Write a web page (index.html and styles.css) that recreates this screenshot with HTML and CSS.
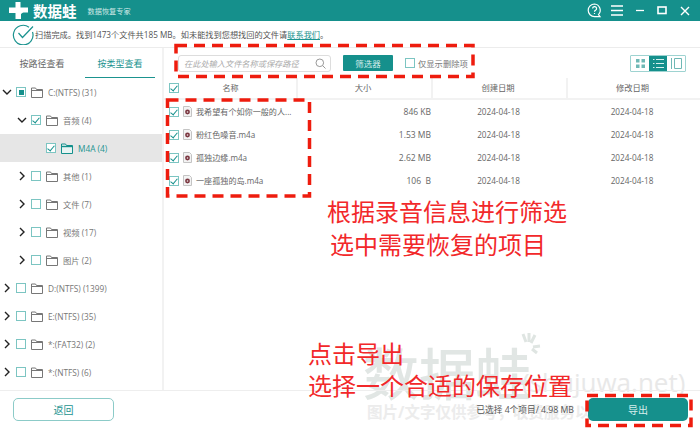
FILE: index.html
```html
<!DOCTYPE html>
<html lang="zh-CN">
<head>
  <meta charset="UTF-8" />
  <title>数据蛙数据恢复专家</title>
  <link rel="stylesheet" href="styles.css">
</head>
<body>

  <svg class="defs" width="0" height="0">
    <symbol id="folder" viewBox="0 0 12 11">
      <path d="M.5 10.5V1h4l1 1.5h6v8z" fill="#fff" stroke="#777"/>
      <path d="M.5 3.5h11" stroke="#777"/>
    </symbol>
    <symbol id="folder-on" viewBox="0 0 12 11">
      <path d="M.5 10.5V1h4l1 1.5h6v8z" fill="#e8f4f3" stroke="#15908c"/>
      <path d="M.5 3.5h11" stroke="#15908c" stroke-width="1.4"/>
    </symbol>
    <symbol id="open" viewBox="0 0 10 10">
      <path d="M1 3l4 4 4-4" fill="none" stroke="#222" stroke-width="1.4"/>
    </symbol>
    <symbol id="shut" viewBox="0 0 10 10">
      <path d="M3 1l4 4-4 4" fill="none" stroke="#222" stroke-width="1.4"/>
    </symbol>
    <symbol id="audio" viewBox="0 0 9 11">
      <path d="M.5.5h6l2 2v8h-8z" fill="#f3f3f3" stroke="#c4c4c4"/>
      <circle cx="4.5" cy="6" r="2.4" fill="#7b3640"/>
      <circle cx="4.5" cy="6" r=".8" fill="#eee"/>
    </symbol>
  </svg>

  <!-- watermark lies under the window content -->
  <div class="mark-big">数据蛙</div>
  <svg class="mark-paw" width="24" height="24" viewBox="0 0 24 24">
    <path d="M5 1l3 8M11 0l0 9M17 2l-4 8M22 13l-7 1M19 20l-5-4" stroke="#dfe5e2" stroke-width="3" fill="none"/>
  </svg>
  <div class="mark-url">(shujuwa.net)</div>
  <div class="mark-note">图片/文字仅供参考，收费服务以实际为准</div>

  <div class="app">
    <header class="topbar">
      <svg class="logo" width="19" height="17" viewBox="0 0 19 17">
        <path d="M6.500 0h5v5.500H19v5h-4.500c-1 0-1.500 1-2.500 1.500v5H6.500v-6H0v-5.500h6.500z" fill="#fff"/>
      </svg>
      <span class="brand">数据蛙</span>
      <span class="slogan">数据恢复专家</span>
      <div class="win-btns">
        <svg class="help" width="15" height="15" viewBox="0 0 15 15">
          <path d="M7.500 1a6.300 6.300 0 1 0 0 12.600h5.500l-1.500-2A6.300 6.300 0 0 0 7.500 1z" fill="none" stroke="#fff" stroke-width="1.200"/>
          <path d="M5.600 5.600a2 2 0 1 1 2.800 1.800c-.7.3-.9.700-.9 1.300M7.500 10v1" fill="none" stroke="#fff" stroke-width="1.200"/>
        </svg>
        <svg width="12" height="11" viewBox="0 0 12 11"><path d="M0 1h12M0 5.500h12M0 10h12" stroke="#fff" stroke-width="1.300"/></svg>
        <svg width="8" height="11" viewBox="0 0 8 11"><path d="M0 5.500h8" stroke="#fff" stroke-width="1.300"/></svg>
        <svg width="10" height="9" viewBox="0 0 10 9"><rect x="1" y="1" width="8" height="6.500" fill="none" stroke="#fff" stroke-width="1.600"/></svg>
        <svg width="10" height="10" viewBox="0 0 10 10"><path d="M1 1l8 8M9 1l-8 8" stroke="#fff" stroke-width="1.400"/></svg>
      </div>
    </header>

    <div class="status">
      <svg width="22" height="22" viewBox="0 0 22 22">
        <path d="M17 4.200A9.800 9.800 0 1 0 20.500 9" fill="none" stroke="#1b938f" stroke-width="1.200"/>
        <path d="M6.500 10l4 4.500L21 3.500" fill="none" stroke="#1b938f" stroke-width="1.200"/>
      </svg>
      <p>扫描完成。找到1473个文件共185 MB。如未能找到您想找回的文件请<a href="#">联系我们</a>。</p>
    </div>

    <main class="main">
      <aside class="side">
        <div class="tabs">
          <span class="tab">按路径查看</span>
          <span class="tab active">按类型查看</span>
        </div>
        <ul class="tree">
          <li class="node"><svg class="arrow"><use href="#open"/></svg><i class="box part"></i><svg class="folder"><use href="#folder"/></svg>C:(NTFS) (31)</li>
          <li class="node lv1"><svg class="arrow"><use href="#open"/></svg><i class="box on"></i><svg class="folder"><use href="#folder"/></svg>音频 (4)</li>
          <li class="node lv2 current"><i class="box on"></i><svg class="folder"><use href="#folder-on"/></svg>M4A (4)</li>
          <li class="node lv1"><svg class="arrow"><use href="#shut"/></svg><i class="box"></i><svg class="folder"><use href="#folder"/></svg>其他 (1)</li>
          <li class="node lv1"><svg class="arrow"><use href="#shut"/></svg><i class="box"></i><svg class="folder"><use href="#folder"/></svg>文件 (7)</li>
          <li class="node lv1"><svg class="arrow"><use href="#shut"/></svg><i class="box"></i><svg class="folder"><use href="#folder"/></svg>视频 (17)</li>
          <li class="node lv1"><svg class="arrow"><use href="#shut"/></svg><i class="box"></i><svg class="folder"><use href="#folder"/></svg>图片 (2)</li>
          <li class="node"><svg class="arrow"><use href="#shut"/></svg><i class="box"></i><svg class="folder"><use href="#folder"/></svg>D:(NTFS) (1399)</li>
          <li class="node"><svg class="arrow"><use href="#shut"/></svg><i class="box"></i><svg class="folder"><use href="#folder"/></svg>E:(NTFS) (35)</li>
          <li class="node"><svg class="arrow"><use href="#shut"/></svg><i class="box"></i><svg class="folder"><use href="#folder"/></svg>*:(FAT32) (2)</li>
          <li class="node"><svg class="arrow"><use href="#shut"/></svg><i class="box"></i><svg class="folder"><use href="#folder"/></svg>*:(NTFS) (6)</li>
        </ul>
      </aside>

      <section class="content">
        <div class="toolbar">
          <div class="search">
            <span>在此处输入文件名称或保存路径</span>
            <svg width="11" height="11" viewBox="0 0 11 11"><circle cx="4.800" cy="4.800" r="3.800" fill="none" stroke="#999"/><path d="M7.500 7.500l3 3" stroke="#999"/></svg>
          </div>
          <button class="filter-btn">筛选器</button>
          <label class="only-del"><i class="box"></i>仅显示删除项</label>
          <div class="views">
            <span class="view">
              <svg width="9" height="9" viewBox="0 0 9 9"><path d="M0 0h3.500v3.500H0zM5.500 0H9v3.500H5.500zM0 5.500h3.500V9H0zM5.500 5.500H9V9H5.500z" fill="#6fb8b5"/></svg>
            </span>
            <span class="view active">
              <svg width="11" height="9" viewBox="0 0 11 9"><path d="M0 .5h1.500M3 .5h8M0 4.500h1.500M3 4.500h8M0 8.500h1.500M3 8.500h8" stroke="#d7efee"/></svg>
            </span>
            <span class="view">
              <svg width="11" height="11" viewBox="0 0 11 11"><path d="M.5 0v11M3.500.5h7v10h-7z" fill="none" stroke="#6fb8b5"/></svg>
            </span>
          </div>
        </div>

        <div class="grid-row head">
          <div class="cell name-cell"><i class="box on"></i><span class="title">名称</span></div>
          <div class="cell center">大小</div>
          <div class="cell center">创建日期</div>
          <div class="cell center">修改日期</div>
        </div>
        <div class="grid-row file">
          <div class="cell name-cell"><i class="box on"></i><svg class="audio"><use href="#audio"/></svg>我希望有个如你一般的人...</div>
          <div class="cell size">846 KB</div>
          <div class="cell center">2024-04-18</div>
          <div class="cell center">2024-04-18</div>
        </div>
        <div class="grid-row file">
          <div class="cell name-cell"><i class="box on"></i><svg class="audio"><use href="#audio"/></svg>粉红色噪音.m4a</div>
          <div class="cell size">1.53 MB</div>
          <div class="cell center">2024-04-18</div>
          <div class="cell center">2024-04-18</div>
        </div>
        <div class="grid-row file">
          <div class="cell name-cell"><i class="box on"></i><svg class="audio"><use href="#audio"/></svg>孤独边缘.m4a</div>
          <div class="cell size">2.62 MB</div>
          <div class="cell center">2024-04-18</div>
          <div class="cell center">2024-04-18</div>
        </div>
        <div class="grid-row file">
          <div class="cell name-cell"><i class="box on"></i><svg class="audio"><use href="#audio"/></svg>一座孤独的岛.m4a</div>
          <div class="cell size">106&nbsp; B</div>
          <div class="cell center">2024-04-18</div>
          <div class="cell center">2024-04-18</div>
        </div>
      </section>
    </main>

    <footer class="bottom">
      <button class="back-btn">返回</button>
      <span class="picked">已选择 4个项目/ 4.98 MB</span>
      <button class="export-btn">导出</button>
    </footer>
  </div>

  <!-- red notes sit on top of the screenshot -->
  <svg class="dashes" width="700" height="435">
    <rect x="176" y="45.500" width="297" height="31"/>
    <rect x="167.500" y="100" width="142" height="96"/>
    <rect x="587" y="395.500" width="104" height="30"/>
  </svg>
  <div class="note note-a">根据录音信息进行筛选</div>
  <div class="note note-b">选中需要恢复的项目</div>
  <div class="note note-c">点击导出</div>
  <div class="note note-d">选择一个合适的保存位置</div>

</body>
</html>
```

FILE: styles.css
```css
* {
  box-sizing: border-box;
}
body {
  margin: 0;
  width: 700px;
  height: 435px;
  overflow: hidden;
  position: relative;
  background: #fff;
  font-family: "Open Sans", "Noto Sans CJK SC", sans-serif;
  font-size: 8.300px;
  color: #666;
}
.defs {
  position: absolute;
}
.app {
  display: flex;
  flex-direction: column;
  position: relative;
  height: 435px;
}

/* title bar */
.topbar {
  display: flex;
  align-items: center;
  height: 21px;
  padding: 0 10px 0 9px;
  background: #15908c;
  color: #fff;
  overflow: hidden;
}
.logo {
  flex: none;
}
.brand {
  margin-left: 5px;
  font-family: "Noto Sans CJK SC", sans-serif;
  font-size: 14.500px;
  font-weight: 700;
  line-height: 21px;
}
.slogan {
  margin-left: 11px;
  font-size: 7.200px;
  color: #cfe8e6;
}
.win-btns {
  display: flex;
  align-items: center;
  gap: 13px;
  margin-left: auto;
}
.help {
  margin-right: -4px;
}

/* scan result line */
.status {
  display: flex;
  align-items: center;
  gap: 1px;
  height: 27px;
  padding-left: 12px;
  border-bottom: 1px solid #ececec;
}
.status p {
  margin: 0;
  font-size: 8.200px;
  color: #555;
}
.status a {
  color: #1b938f;
}

.main {
  display: flex;
  flex: 1;
  min-height: 0;
}

/* left tree */
.side {
  width: 164px;
  border-right: 2px solid #f2f2f2;
}
.tabs {
  display: flex;
  height: 30px;
}
.tab {
  flex: none;
  width: 70px;
  margin-left: 1px;
  padding-top: 9px;
  text-align: center;
  font-size: 9px;
  color: #666;
}
.tab:first-child {
  width: 84px;
  margin-left: 0;
}
.tab.active {
  color: #1b938f;
  border-bottom: 1px solid #1b938f;
}
.tree {
  list-style: none;
  margin: 0;
  padding: 0;
}
.node {
  display: flex;
  align-items: center;
  height: 28px;
  padding-left: 2px;
  color: #777;
}
.lv1 {
  padding-left: 17px;
}
.lv2 {
  padding-left: 46px;
}
.current {
  background: #e6e6e6;
  color: #1b938f;
}
.arrow {
  width: 10px;
  height: 10px;
  margin-right: 4px;
}
.folder {
  width: 12px;
  height: 11px;
  margin: 0 5px;
}
.box {
  display: inline-block;
  position: relative;
  flex: none;
  width: 10px;
  height: 10px;
  border: 1px solid #7cc5c2;
  background: #fff;
}
.box.on::after {
  content: "";
  position: absolute;
  left: 2px;
  top: 0;
  width: 3px;
  height: 6px;
  border: solid #15908c;
  border-width: 0 1.300px 1.300px 0;
  transform: rotate(40deg);
}
.box.part::after {
  content: "";
  position: absolute;
  left: 1.500px;
  top: 1.500px;
  width: 5px;
  height: 5px;
  background: #15908c;
}

/* right file list */
.content {
  flex: 1;
  min-width: 0;
}
.toolbar {
  display: flex;
  align-items: center;
  height: 30px;
  padding: 0 14px 0 14px;
}
.search {
  display: flex;
  align-items: center;
  justify-content: space-between;
  width: 153px;
  height: 17px;
  padding: 0 4px 0 5px;
  border: 1px solid #ddd;
  border-radius: 3px;
  font-size: 8.200px;
  font-style: italic;
  color: #aaa;
}
.filter-btn {
  width: 50px;
  height: 16px;
  margin-left: 12px;
  padding: 0;
  border: 0;
  border-radius: 1px;
  background: #15908c;
  color: #d5eeec;
  font: 8.500px "Noto Sans CJK SC", sans-serif;
}
.only-del {
  display: flex;
  align-items: center;
  gap: 3px;
  margin-left: 12px;
  font-size: 8.300px;
  color: #777;
}
.views {
  display: flex;
  margin-left: auto;
  height: 17px;
  border: 1px solid #9ed3d1;
  border-radius: 1px;
}
.view {
  display: flex;
  align-items: center;
  justify-content: center;
  width: 18px;
}
.view.active {
  background: #15908c;
}
.grid-row {
  display: grid;
  grid-template-columns: 134px 135px 135px 1fr;
}
.head {
  height: 22px;
  border-bottom: 2px solid #f2f2f2;
}
.head .cell {
  border-right: 2px solid #f2f2f2;
  line-height: 20px;
}
.head .cell:last-child {
  border-right: 0;
}
.cell {
  font-size: 8.100px;
  color: #666;
}
.center {
  text-align: center;
}
.head .center {
  font-size: 8.300px;
  padding-right: 3px;
}
.name-cell {
  display: flex;
  align-items: center;
  padding-left: 5px;
  white-space: nowrap;
}
.title {
  flex: 1;
  padding-right: 14px;
  text-align: center;
}
.file {
  height: 23px;
  line-height: 23px;
}
.file .center {
  font-size: 8.200px;
  padding-right: 4px;
}
.size {
  padding-right: 2px;
  text-align: right;
  font-size: 8.500px;
}
.audio {
  flex: none;
  width: 9px;
  height: 11px;
  margin: 0 4px;
}

/* footer */
.bottom {
  display: flex;
  align-items: center;
  height: 45px;
  padding: 0 12px 8px 13px;
  border-top: 1px solid #eee;
}
.back-btn {
  width: 101px;
  height: 23px;
  padding: 0;
  border: 1px solid #8ccbc8;
  border-radius: 5px;
  background: #fff;
  color: #1b938f;
  font: 10px "Noto Sans CJK SC", sans-serif;
}
.picked {
  margin-left: auto;
  margin-right: 14px;
  font-size: 8.700px;
  color: #555;
}
.export-btn {
  width: 100px;
  height: 23px;
  padding: 0;
  border: 0;
  border-radius: 5px;
  background: #15908c;
  color: #d5eeec;
  font: 10px "Noto Sans CJK SC", sans-serif;
}

/* watermark */
.mark-big, .mark-url, .mark-note, .mark-paw {
  position: absolute;
  color: #e1e6e4;
  white-space: nowrap;
}
.mark-big {
  left: 363px;
  top: 331px;
  font-family: "Noto Sans CJK SC", sans-serif;
  font-size: 56px;
  font-weight: 500;
  line-height: 80px;
}
.mark-paw {
  left: 518px;
  top: 333px;
}
.mark-url {
  left: 522px;
  top: 366px;
  font-size: 26px;
  line-height: 32px;
  color: #e8e8e8;
}
.mark-note {
  left: 367px;
  top: 402px;
  font-size: 15.500px;
  font-weight: 700;
  line-height: 20px;
  color: #ececec;
}

/* red notes */
.dashes {
  position: absolute;
  left: 0;
  top: 0;
}
.dashes rect {
  fill: none;
  stroke: #ee1c0e;
  stroke-width: 3.500px;
  stroke-dasharray: 11 7;
}
.note {
  position: absolute;
  font-family: "Noto Sans CJK SC", sans-serif;
  font-size: 24px;
  line-height: 30px;
  color: #f2282a;
  white-space: nowrap;
}
.note-a {
  left: 327px;
  top: 196px;
}
.note-b {
  left: 330px;
  top: 229px;
}
.note-c {
  left: 308px;
  top: 338px;
}
.note-d {
  left: 308px;
  top: 370px;
}
```
